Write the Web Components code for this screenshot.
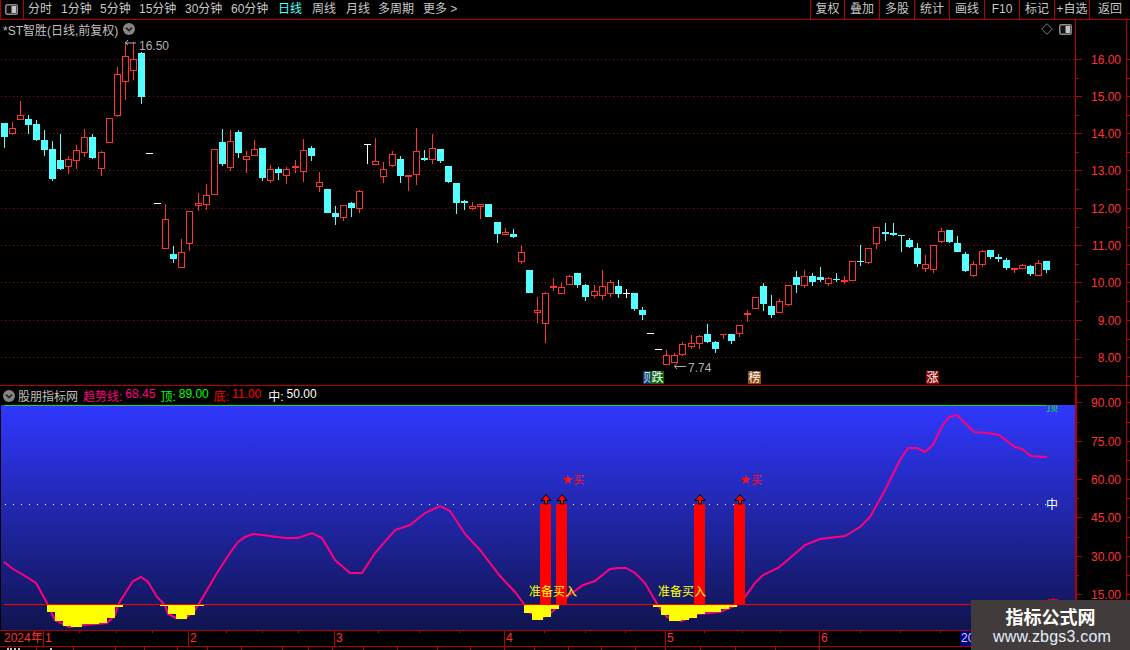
<!DOCTYPE html>
<html lang="zh">
<head>
<meta charset="utf-8">
<title>K线</title>
<style>
  html, body { margin: 0; padding: 0; background: #000; }
</style>
</head>
<body>
<tdx-app>
  <tdx-toolbar>
    <tool-item w="33">分时</tool-item>
    <tool-item w="39">1分钟</tool-item>
    <tool-item w="39">5分钟</tool-item>
    <tool-item w="46">15分钟</tool-item>
    <tool-item w="46">30分钟</tool-item>
    <tool-item w="47">60分钟</tool-item>
    <tool-item w="34" active>日线</tool-item>
    <tool-item w="34">周线</tool-item>
    <tool-item w="32">月线</tool-item>
    <tool-item w="45">多周期</tool-item>
    <tool-item w="40">更多 &gt;</tool-item>
    <box-item slot="right" w="34">复权</box-item>
    <box-item slot="right" w="35">叠加</box-item>
    <box-item slot="right" w="35">多股</box-item>
    <box-item slot="right" w="35">统计</box-item>
    <box-item slot="right" w="35">画线</box-item>
    <box-item slot="right" w="35">F10</box-item>
    <box-item slot="right" w="35">标记</box-item>
    <box-item slot="right" w="35">+自选</box-item>
    <box-item slot="right" w="41">返回</box-item>
  </tdx-toolbar>

  <kline-pane>*ST智胜(日线,前复权)</kline-pane>

  <indicator-pane>
    <span slot="name">股朋指标网</span>
    <legend-item color="#ff0080" value="68.45">趋势线:</legend-item>
    <legend-item color="#00ff00" value="89.00">顶:</legend-item>
    <legend-item color="#ff0000" value="11.00">底:</legend-item>
    <legend-item color="#ffffff" value="50.00" style="margin-left:2px">中:</legend-item>
  </indicator-pane>

  <time-axis>
    <time-cell w="39" plain>2024年</time-cell>
    <time-cell w="145">1</time-cell>
    <time-cell w="146">2</time-cell>
    <time-cell w="170">3</time-cell>
    <time-cell w="161">4</time-cell>
    <time-cell w="154">5</time-cell>
    <time-cell w="141">6</time-cell>
    <time-cell w="40" selected>20</time-cell>
  </time-axis>

  <site-badge url="www.zbgs3.com">指标公式网</site-badge>
</tdx-app>

<script>
const FONT = '"Liberation Sans", "Noto Sans CJK SC", sans-serif';
const RED_LINE = "#b40000";
const AXIS_RED = "#ff3232";

class TdxApp extends HTMLElement {
  constructor() {
    super();
    this.attachShadow({ mode: "open" });
    this.shadowRoot.innerHTML = `
      <style>
        :host {
          display: flex;
          flex-direction: column;
          position: relative;
          width: 1130px;
          height: 650px;
          overflow: hidden;
          background: #000;
          font: 12px ${FONT};
          color: #c0c0c0;
        }
      </style>
      <slot></slot>
    `;
  }
}

class PanelIcon extends HTMLElement {
  constructor() {
    super();
    this.attachShadow({ mode: "open" });
    this.shadowRoot.innerHTML = `
      <style>:host { display: block; width: 13px; height: 11px; } svg { display: block; }</style>
      <svg width="13" height="11" viewBox="0 0 13 11">
        <rect x="0.75" y="0.75" width="11.5" height="9.5" rx="1.5" fill="#111" stroke="#8c8c8c" stroke-width="1.5"/>
        <rect x="6.5" y="2" width="4.5" height="7" fill="#c4c4c4"/>
      </svg>
    `;
  }
}

class RoundChevron extends HTMLElement {
  constructor() {
    super();
    this.attachShadow({ mode: "open" });
    this.shadowRoot.innerHTML = `
      <style>:host { display: block; width: 12px; height: 12px; } svg { display: block; }</style>
      <svg width="12" height="12" viewBox="0 0 12 12">
        <circle cx="6" cy="6" r="6" fill="#858585"/>
        <path d="M3 4.6 L6 7.6 L9 4.6" fill="none" stroke="#222" stroke-width="1.6"/>
      </svg>
    `;
  }
}

class TdxToolbar extends HTMLElement {
  constructor() {
    super();
    this.attachShadow({ mode: "open" });
    this.shadowRoot.innerHTML = `
      <style>
        :host {
          display: flex;
          flex: none;
          height: 19px;
          border-bottom: 1px solid ${RED_LINE};
          box-sizing: content-box;
        }
        .toggle {
          flex: none;
          box-sizing: border-box;
          width: 24px;
          display: flex;
          align-items: center;
          justify-content: center;
          border-left: 1px solid ${RED_LINE};
          border-right: 1px solid ${RED_LINE};
          padding-right: 1px;
        }
        .left { display: flex; padding-left: 4px; flex: 1; }
        .right { display: flex; flex: none; }
      </style>
      <div class="toggle"><panel-icon></panel-icon></div>
      <div class="left"><slot></slot></div>
      <div class="right"><slot name="right"></slot></div>
    `;
  }
}

class ToolItem extends HTMLElement {
  constructor() {
    super();
    this.attachShadow({ mode: "open" });
    this.shadowRoot.innerHTML = `
      <style>
        :host {
          display: block;
          flex: none;
          line-height: 19px;
          white-space: nowrap;
          color: #c8c8c8;
        }
        :host([active]) { color: #54ffff; }
      </style>
      <slot></slot>
    `;
  }

  connectedCallback() {
    this.style.width = this.getAttribute("w") + "px";
  }
}

class BoxItem extends HTMLElement {
  constructor() {
    super();
    this.attachShadow({ mode: "open" });
    this.shadowRoot.innerHTML = `
      <style>
        :host {
          display: block;
          flex: none;
          box-sizing: border-box;
          border-left: 1px solid ${RED_LINE};
          line-height: 19px;
          text-align: center;
          white-space: nowrap;
          color: #c8c8c8;
        }
      </style>
      <slot></slot>
    `;
  }

  connectedCallback() {
    this.style.width = this.getAttribute("w") + "px";
  }
}

// ticks is "y:label" separated by commas, minor ticks fall half way
class PriceAxis extends HTMLElement {
  constructor() {
    super();
    this.attachShadow({ mode: "open" });
  }

  connectedCallback() {
    const top = +this.getAttribute("top");
    const h = +this.getAttribute("h");
    const lw = +(this.getAttribute("line") || 1);
    const ticks = this.getAttribute("ticks").split(",").map((t) => t.split(":"));
    let out = `<rect x="1075" y="${top}" width="${lw}" height="${h}" fill="${RED_LINE}"/>`;
    out += `<rect x="1126" y="${top}" width="1" height="${h}" fill="${RED_LINE}"/>`;
    ticks.forEach(([y, label], i) => {
      out += `<rect x="1075" y="${y}" width="7" height="1" fill="${RED_LINE}"/>`;
      out += `<rect x="1126" y="${y}" width="4" height="1" fill="${RED_LINE}"/>`;
      out += `<text x="1121" y="${+y + 5}" text-anchor="end" fill="${AXIS_RED}">${label}</text>`;
      const next = ticks[i + 1] ? +ticks[i + 1][0] : +y + (+y - +ticks[i - 1][0]);
      const mid = Math.round((+y + next) / 2);
      if (mid < top + h) {
        out += `<rect x="1075" y="${mid}" width="4" height="1" fill="${RED_LINE}"/>`;
        out += `<rect x="1126" y="${mid}" width="4" height="1" fill="${RED_LINE}"/>`;
      }
    });
    this.shadowRoot.innerHTML = `
      <style>
        :host { display: block; flex: none; width: 55px; }
        svg { display: block; font: 12px ${FONT}; }
      </style>
      <svg width="55" height="${h}" viewBox="1075 ${top} 55 ${h}">${out}</svg>
    `;
  }
}

// x, kind, body top, body bottom, wick top, wick bottom (0 = no wick), screen pixels
const CANDLES = [
  [4,"c",123,137,0,148],[12,"r",128,134,122,135],[20,"r",115,120,101,0],[28,"c",119,125,115,134],
  [36,"c",124,140,120,141],[44,"c",140,150,130,156],[52,"c",149,179,141,181],[60,"c",160,169,134,170],
  [68,"r",159,167,156,174],[76,"r",150,161,145,169],[84,"r",137,153,129,157],[92,"c",137,158,134,159],
  [101,"r",152,169,151,176],[109,"r",118,143,0,0],[117,"r",74,116,67,117],[125,"r",56,82,42,100],
  [133,"r",59,71,42,80],[141,"c",53,97,52,104],[149,"w",153,154,0,0],[157,"w",203,204,0,0],
  [165,"r",219,249,204,0],[173,"c",254,259,246,263],[181,"r",252,268,239,0],[189,"r",211,244,0,251],
  [198,"r",203,206,193,211],[206,"r",195,205,184,210],[214,"r",149,195,0,0],[222,"c",142,164,129,166],
  [230,"r",141,168,130,171],[238,"c",132,153,130,158],[246,"r",156,160,151,173],[254,"r",149,156,140,0],
  [262,"c",148,178,0,181],[270,"r",169,181,165,183],[278,"c",169,173,167,180],[286,"r",169,176,167,184],
  [295,"r",166,168,160,173],[303,"r",150,172,139,182],[311,"c",148,156,146,161],[319,"r",182,187,172,192],
  [327,"c",189,213,0,0],[335,"c",213,217,206,225],[343,"r",205,218,0,221],[351,"c",203,208,202,217],
  [359,"r",191,209,190,213],[367,"w",144,145,0,164],[375,"r",161,165,138,0],[383,"r",169,177,162,183],
  [392,"r",154,166,151,167],[400,"c",159,176,156,183],[408,"r",175,177,0,191],[416,"r",151,175,128,185],
  [424,"c",158,160,150,161],[432,"r",148,160,134,164],[440,"c",149,161,0,163],[448,"c",166,182,0,183],
  [456,"c",183,203,0,214],[464,"c",201,203,200,210],[472,"r",206,209,202,210],[480,"r",204,207,0,219],
  [488,"c",204,217,0,0],[497,"c",222,234,0,243],[505,"r",232,235,228,0],[513,"c",234,237,229,238],
  [521,"r",252,262,245,264],[529,"c",270,293,0,0],[537,"r",310,313,297,323],[545,"r",293,324,292,343],
  [553,"r",286,288,278,291],[561,"r",287,294,283,0],[569,"r",276,285,275,0],[577,"c",273,285,0,288],
  [585,"c",285,297,284,301],[594,"r",291,296,285,298],[602,"r",286,296,270,300],[610,"r",282,294,280,297],
  [618,"c",286,294,280,298],[626,"w",293,294,289,298],[634,"c",293,309,0,311],[642,"c",310,315,307,320],
  [650,"w",333,334,0,0],[658,"w",349,350,0,0],[666,"r",355,365,350,0],[674,"r",355,363,353,0],
  [682,"r",344,355,342,356],[691,"r",343,347,335,349],[699,"r",336,344,335,349],[707,"c",334,342,324,343],
  [715,"c",342,349,341,353],[723,"r",334,335,0,339],[731,"c",334,341,0,344],[739,"r",325,334,0,337],
  [747,"r",313,315,310,322],[755,"r",297,309,0,0],[763,"c",286,304,283,311],[771,"c",306,315,295,318],
  [779,"r",301,313,299,0],[788,"r",285,305,0,306],[796,"c",277,285,271,293],[804,"r",276,286,270,288],
  [812,"c",276,282,273,286],[820,"c",277,280,267,282],[828,"r",278,284,277,286],[836,"c",279,280,273,282],
  [844,"r",280,282,276,284],[852,"r",261,281,0,0],[860,"c",261,262,245,266],[868,"r",248,263,0,264],
  [876,"r",227,244,0,249],[885,"c",232,234,223,241],[893,"c",233,235,223,236],[901,"c",235,236,0,252],
  [909,"c",240,247,238,248],[917,"c",248,264,243,267],[925,"r",264,269,255,272],[933,"r",245,270,0,273],
  [941,"r",231,242,228,243],[949,"c",230,242,0,243],[957,"c",243,252,236,0],[965,"c",254,271,252,272],
  [973,"r",264,276,261,277],[982,"r",251,265,250,267],[990,"c",250,257,0,259],[998,"c",257,259,254,262],
  [1006,"c",260,268,258,270],[1014,"r",268,270,0,273],[1022,"r",265,269,264,0],[1030,"c",266,274,265,276],
  [1038,"r",263,276,260,0],[1046,"c",261,270,0,273]
];

const CANDLE_COLORS = { r: "#ff3232", c: "#54ffff", w: "#ffffff" };

class KlinePane extends HTMLElement {
  constructor() {
    super();
    this.attachShadow({ mode: "open" });
    this.shadowRoot.innerHTML = `
      <style>
        :host {
          display: flex;
          flex: none;
          height: 365px;
          border-bottom: 1px solid ${RED_LINE};
        }
        .plot { position: relative; flex: none; width: 1075px; height: 365px; }
        svg.chart { display: block; font: 12px ${FONT}; }
        .head {
          position: absolute;
          left: 3px;
          right: 3px;
          top: 0;
          height: 18px;
          display: flex;
          align-items: center;
          gap: 5px;
          white-space: nowrap;
        }
        .head .extra { margin-left: auto; display: flex; align-items: center; gap: 6px; }
      </style>
      <div class="plot">
        <svg class="chart" width="1075" height="365" viewBox="0 20 1075 365">${this._draw()}</svg>
        <div class="head">
          <slot></slot>
          <round-chevron></round-chevron>
          <div class="extra">
            <svg width="12" height="12" viewBox="0 0 12 12"><path d="M6 .7 L11.3 6 L6 11.3 L.7 6 Z" fill="none" stroke="#808080"/></svg>
            <panel-icon></panel-icon>
          </div>
        </div>
      </div>
      <price-axis top="20" h="365" ticks="59:16.00,96:15.00,133:14.00,170:13.00,208:12.00,245:11.00,282:10.00,320:9.00,357:8.00"></price-axis>
    `;
  }

  _draw() {
    let out = "";
    [59, 96, 133, 170, 208, 245, 282, 320, 357].forEach((y) => {
      out += `<line x1="1" x2="1075" y1="${y + 0.5}" y2="${y + 0.5}" stroke="#8c1414" stroke-dasharray="1 3"/>`;
    });
    out += `<g shape-rendering="crispEdges">`;
    CANDLES.forEach(([x, kind, top, bottom, wickTop, wickBottom]) => {
      const color = CANDLE_COLORS[kind];
      if (wickTop) out += `<rect x="${x}" y="${wickTop}" width="1" height="${top - wickTop}" fill="${color}"/>`;
      if (wickBottom) out += `<rect x="${x}" y="${bottom}" width="1" height="${wickBottom - bottom}" fill="${color}"/>`;
      if (kind === "r" && bottom - top > 2) {
        out += `<rect x="${x - 2.5}" y="${top + 0.5}" width="6" height="${bottom - top - 1}" fill="#000" stroke="${color}"/>`;
      } else {
        out += `<rect x="${x - 3}" y="${top}" width="7" height="${bottom - top}" fill="${color}"/>`;
      }
    });
    out += `</g>`;
    // high and low marks
    out += `<path d="M128 40 L125.5 43 L128 45 M125.5 43 H136" fill="none" stroke="#b0b0b0"/>`;
    out += `<text x="139" y="50" fill="#b0b0b0">16.50</text>`;
    out += `<path d="M677 363.5 L674.5 366 L677 369 M674.5 366.5 H686" fill="none" stroke="#b0b0b0"/>`;
    out += `<text x="688" y="372" fill="#b0b0b0">7.74</text>`;
    // event badges
    const badge = (x, w, bg, label, sx = 1) =>
      `<rect x="${x}" y="371" width="${w}" height="13" fill="${bg}"/><text transform="translate(${x + 0.5} 382) scale(${sx} 1)" fill="#fff">${label}</text>`;
    out += badge(643, 8, "#0a3f70", "贝", 0.62);
    out += badge(651, 13, "#04660a", "跌");
    out += badge(748, 13, "#8c4a12", "榜");
    out += badge(926, 13, "#8c0808", "涨");
    return out;
  }
}

class LegendItem extends HTMLElement {
  constructor() {
    super();
    this.attachShadow({ mode: "open" });
    this.shadowRoot.innerHTML = `
      <style>
        :host { display: flex; flex: none; gap: 3px; white-space: nowrap; }
      </style>
      <slot></slot><span id="value"></span>
    `;
  }

  connectedCallback() {
    this.style.color = this.getAttribute("color");
    this.shadowRoot.querySelector("#value").textContent = this.getAttribute("value");
  }
}

const TREND = [
  [4,562],[13,569],[25,576],[36,583],[47,603],[55,620],[69,627],[82,625],[107,623],[115,615],[119,603],[126,592],
  [133,581],[141,577],[148,582],[157,597],[165,605],[168,614],[176,618],[187,617],[195,610],[203,597],[217,573],
  [230,553],[238,542],[245,537],[253,534],[270,536],[285,538],[298,538],[312,533],[322,538],[335,560],[350,573],
  [362,573],[375,553],[395,530],[410,525],[425,513],[440,506],[450,511],[465,534],[480,550],[500,576],[515,592],
  [524,604],[530,613],[543,617],[551,613],[559,605],[567,597],[583,585],[595,581],[610,569],[618,568],[626,568],
  [635,573],[645,583],[653,597],[659,607],[667,617],[682,621],[697,614],[720,612],[737,605],[745,597],[755,583],
  [763,575],[778,568],[790,558],[805,545],[820,539],[845,536],[860,527],[870,517],[885,490],[900,460],[908,448],
  [917,448],[925,452],[933,445],[941,428],[949,417],[957,415],[965,423],[974,432],[988,433],[999,435],[1015,447],
  [1022,449],[1031,456],[1047,457]
];

// from x, to x, bottom y of the stepped fill under the floor line
const FILL_STEPS = [
  [47,55,612],[55,63,621],[63,71,626],[71,82,627],[82,99,624],[99,107,623],[107,115,618],[115,123,607],
  [160,168,606],[168,176,614],[176,187,619],[187,195,615],[195,204,606],
  [524,532,613],[532,543,620],[543,551,617],[551,559,609],
  [653,661,607],[661,669,615],[669,681,621],[681,689,620],[689,697,618],[697,705,614],[705,721,612],[721,729,609],[729,737,607]
];

const BUY_BARS = [[540,546],[556,562],[694,700],[734,740]];

class IndicatorPane extends HTMLElement {
  constructor() {
    super();
    this.attachShadow({ mode: "open" });
    this.shadowRoot.innerHTML = `
      <style>
        :host { display: flex; flex: none; height: 244px; }
        .main { flex: none; width: 1075px; display: flex; flex-direction: column; }
        .legend {
          flex: none;
          height: 19px;
          display: flex;
          align-items: center;
          gap: 5px;
          padding-left: 3px;
          white-space: nowrap;
        }
        .name { display: flex; align-items: center; gap: 3px; color: #c0c0c0; }
        svg.chart { display: block; flex: none; font: 12px ${FONT}; }
      </style>
      <div class="main">
        <div class="legend">
          <div class="name"><round-chevron></round-chevron><slot name="name"></slot></div>
          <slot></slot>
        </div>
        <svg class="chart" width="1075" height="225" viewBox="0 405 1075 225">${this._draw()}</svg>
      </div>
      <price-axis top="386" h="244" line="2" ticks="402:90.00,441:75.00,479:60.00,517:45.00,556:30.00,594:15.00"></price-axis>
    `;
  }

  _draw() {
    let out = `<defs><linearGradient id="sky" x1="0" y1="0" x2="0" y2="1">
        <stop offset="0" stop-color="#3038ff"/><stop offset="1" stop-color="#10144f"/>
      </linearGradient></defs>`;
    out += `<rect x="1" y="405" width="1074" height="225" fill="url(#sky)"/>`;
    out += `<rect x="4" y="405" width="1043" height="1" fill="#10e010"/>`;
    out += `<line x1="5" x2="1047" y1="504.5" y2="504.5" stroke="#fff" stroke-dasharray="1 7"/>`;
    out += `<polyline points="${TREND.map((p) => p.join(",")).join(" ")}" fill="none" stroke="#ff0080" stroke-width="2"/>`;
    out += `<g shape-rendering="crispEdges">`;
    BUY_BARS.forEach(([x]) => {
      out += `<rect x="${x}" y="504" width="11" height="100" fill="#ff0000"/>`;
    });
    FILL_STEPS.forEach(([a, b, y]) => {
      out += `<rect x="${a}" y="605" width="${b - a}" height="${y - 605}" fill="#ffff00"/>`;
    });
    out += `<rect x="4" y="604" width="1071" height="1" fill="#ff0000"/>`;
    out += `</g>`;
    BUY_BARS.forEach(([, x]) => {
      out += `<path d="M${x - 5} 500.5 L${x} 494.5 L${x + 5} 500.5 H${x + 1.5} V504 H${x - 1.5} V500.5 Z" fill="#ff0000" stroke="#000"/>`;
    });
    [[561.5, 484], [739.5, 484]].forEach(([x, y]) => {
      out += `<text x="${x}" y="${y}" fill="#ff1010"><tspan font-family="DejaVu Sans" font-size="13">★</tspan><tspan font-family="Noto Sans CJK SC" font-size="11">买</tspan></text>`;
    });
    [[529, 596], [658, 596]].forEach(([x, y]) => {
      out += `<text x="${x}" y="${y}" fill="#ffff00">准备买入</text>`;
    });
    out += `<text x="1046" y="411" fill="#10e010">顶</text>`;
    out += `<text x="1046" y="509" fill="#ffffff">中</text>`;
    out += `<text x="1046" y="609" fill="#ff0000">底</text>`;
    return out;
  }
}

class TimeAxis extends HTMLElement {
  constructor() {
    super();
    this.attachShadow({ mode: "open" });
    this.shadowRoot.innerHTML = `
      <style>
        :host {
          display: block;
          position: relative;
          flex: none;
          height: 20px;
          box-sizing: border-box;
          border-top: 1px solid ${RED_LINE};
        }
        .row {
          display: flex;
          height: 15px;
          padding-left: 4px;
          border-bottom: 1px solid ${RED_LINE};
        }
        svg { position: absolute; left: 0; top: -1px; }
      </style>
      <div class="row"><slot></slot></div>
      <svg width="1130" height="20" viewBox="0 630 1130 20" shape-rendering="crispEdges">${this._ticks()}</svg>
    `;
  }

  _ticks() {
    let out = "";
    [79, 116, 152, 226, 262, 298, 378, 419, 459, 544, 585, 625, 704, 742, 780, 860, 900, 940].forEach((x) => {
      out += `<rect x="${x}" y="631" width="1" height="2" fill="${RED_LINE}"/>`;
    });
    [8, 36, 73, 115, 144, 177, 207, 241, 282, 308, 332, 363, 397, 437, 470, 504, 534, 568, 601, 635, 665, 700, 735, 775, 819].forEach((x) => {
      out += `<rect x="${x}" y="647" width="1" height="3" fill="${RED_LINE}"/>`;
    });
    [7, 10, 14, 18, 50].forEach((x) => {
      out += `<rect x="${x}" y="648" width="2" height="2" fill="#c0c0c0"/>`;
    });
    return out;
  }
}

class TimeCell extends HTMLElement {
  constructor() {
    super();
    this.attachShadow({ mode: "open" });
    this.shadowRoot.innerHTML = `
      <style>
        :host {
          display: block;
          flex: none;
          box-sizing: border-box;
          border-left: 1px solid ${RED_LINE};
          padding-left: 1px;
          line-height: 15px;
          color: ${AXIS_RED};
          white-space: nowrap;
        }
        :host([plain]) { border-left: none; padding-left: 0; }
        :host([selected]) { background: #000080; color: #c8d0ff; border-left: none; }
      </style>
      <slot></slot>
    `;
  }

  connectedCallback() {
    this.style.width = this.getAttribute("w") + "px";
  }
}

class SiteBadge extends HTMLElement {
  constructor() {
    super();
    this.attachShadow({ mode: "open" });
    this.shadowRoot.innerHTML = `
      <style>
        :host {
          position: absolute;
          right: 0;
          bottom: 0;
          width: 159px;
          height: 50px;
          background: #413c3b;
          display: flex;
          flex-direction: column;
          align-items: center;
          color: #fff;
        }
        .title {
          margin-top: 4px;
          font: bold 18px/24px "Noto Sans CJK SC", sans-serif;
        }
        .url {
          margin-top: -1px;
          padding-left: 3px;
          font: 16px/20px "Liberation Sans", sans-serif;
          letter-spacing: 0.2px;
          color: #e4eefc;
        }
      </style>
      <div class="title"><slot></slot></div>
      <div class="url" id="url"></div>
    `;
  }

  connectedCallback() {
    this.shadowRoot.querySelector("#url").textContent = this.getAttribute("url");
  }
}

customElements.define("panel-icon", PanelIcon);
customElements.define("round-chevron", RoundChevron);
customElements.define("tool-item", ToolItem);
customElements.define("box-item", BoxItem);
customElements.define("tdx-toolbar", TdxToolbar);
customElements.define("price-axis", PriceAxis);
customElements.define("kline-pane", KlinePane);
customElements.define("legend-item", LegendItem);
customElements.define("indicator-pane", IndicatorPane);
customElements.define("time-cell", TimeCell);
customElements.define("time-axis", TimeAxis);
customElements.define("site-badge", SiteBadge);
customElements.define("tdx-app", TdxApp);
</script>
</body>
</html>
